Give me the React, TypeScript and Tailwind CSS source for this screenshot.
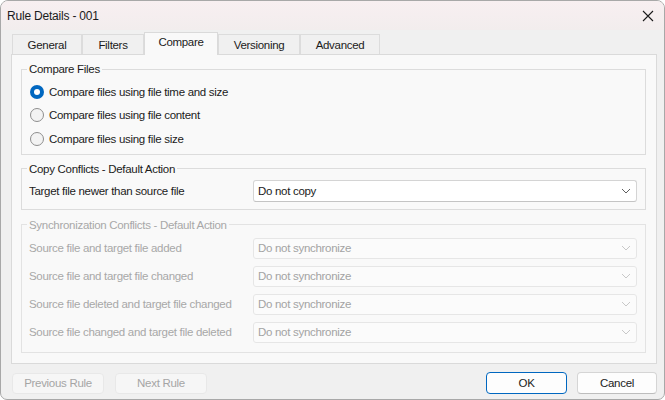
import React, { useState } from "react";

const tabs = ["General", "Filters", "Compare", "Versioning", "Advanced"];
const tabWidths: Record<string, string> = {
  General: "w-[70px]",
  Filters: "w-[62px]",
  Compare: "w-[74px]",
  Versioning: "w-[82px]",
  Advanced: "w-[80px]",
};

const compareOptions = [
  "Compare files using file time and size",
  "Compare files using file content",
  "Compare files using file size",
];

const syncRows = [
  "Source file and target file added",
  "Source file and target file changed",
  "Source file deleted and target file changed",
  "Source file changed and target file deleted",
];

const Chevron: React.FC<{ disabled?: boolean }> = ({ disabled }) => (
  <svg width="10" height="6" viewBox="0 0 10 6" className="shrink-0">
    <path
      d="M1 1 L5 5 L9 1"
      fill="none"
      stroke={disabled ? "#c8c8c8" : "#5f5f5f"}
      strokeWidth="1"
    />
  </svg>
);

const Select: React.FC<{ value: string; disabled?: boolean; tall?: boolean }> = ({
  value,
  disabled,
  tall,
}) => (
  <div
    className={`ml-auto flex w-[384px] shrink-0 items-center justify-between rounded-[3px] border pl-[4px] pr-[5px] ${
      tall ? "h-[22px]" : "h-[21px]"
    } ${
      disabled
        ? "border-[#e6e6e6] bg-[#fbfbfb] text-[#a3a3a3]"
        : "border-[#d4d4d4] border-b-[#c4c4c4] bg-white text-[#1b1b1b]"
    }`}
  >
    <span>{value}</span>
    <Chevron disabled={disabled} />
  </div>
);

const Radio: React.FC<{ checked: boolean; label: string; onClick: () => void }> = ({
  checked,
  label,
  onClick,
}) => (
  <div className="flex h-[23.5px] cursor-default items-center" onClick={onClick}>
    {checked ? (
      <span className="flex h-[14px] w-[14px] items-center justify-center rounded-full bg-[#0067c0]">
        <span className="h-[6px] w-[6px] rounded-full bg-white" />
      </span>
    ) : (
      <span className="h-[14px] w-[14px] rounded-full border border-[#8e8e8e] bg-[#f3f3f3]" />
    )}
    <span className="ml-[5px] text-[#1b1b1b]">{label}</span>
  </div>
);

export default function App() {
  const [compareMode, setCompareMode] = useState(0);
  const [activeTab, setActiveTab] = useState("Compare");

  return (
    <div className="h-[400px] w-[665px] bg-white font-['Liberation_Sans',sans-serif] text-[11.5px] leading-[16px] tracking-[-0.3px]">
      <div className="flex h-full w-full flex-col overflow-hidden rounded-t-[8px] rounded-b-[7px] border border-[#a8a8a8] bg-[#f0f0f0]">
        {/* title bar */}
        <div className="flex h-[29px] shrink-0 items-center justify-between bg-gradient-to-b from-[#f8eff1] to-[#f2eded] pl-[6px] pr-[10px]">
          <span className="text-[12px] tracking-[-0.2px] text-[#1b1b1b]">Rule Details - 001</span>
          <svg width="12" height="12" viewBox="0 0 12 12">
            <path d="M1 1 L11 11 M11 1 L1 11" stroke="#1b1b1b" strokeWidth="1.1" />
          </svg>
        </div>

        {/* tabs */}
        <div className="ml-[11px] mt-[1px] flex h-[23px] items-end">
          {tabs.map((t) => {
            const active = t === activeTab;
            return (
              <div
                key={t}
                onClick={() => setActiveTab(t)}
                className={`flex cursor-default justify-center border border-b-0 ${tabWidths[t]} ${
                  active
                    ? "relative z-10 -mb-px h-[23px] border-[#dadada] bg-[#f9f9f9] pt-[1px]"
                    : "h-[20px] border-[#dcdcdc] bg-[#f0f0f0] pt-[2px]"
                } text-[#1b1b1b]`}
              >
                {t}
              </div>
            );
          })}
        </div>

        {/* panel */}
        <div className="ml-[10px] h-[310px] w-[646px] border border-[#dadada] bg-[#f9f9f9] pl-[9px] pr-[10px] pt-[6px]">
          <fieldset className="border border-[#dcdcdc] pb-[3px] pl-[8px]">
            <legend className="-ml-[3px] px-[2px] text-[#1b1b1b]">Compare Files</legend>
            <div className="pt-[3px]">
              {compareOptions.map((o, i) => (
                <Radio key={o} label={o} checked={compareMode === i} onClick={() => setCompareMode(i)} />
              ))}
            </div>
          </fieldset>

          <fieldset className="mt-[6px] border border-[#dcdcdc] pb-[7px] pl-[7px] pr-[8px]">
            <legend className="-ml-[2px] px-[2px] text-[#1b1b1b]">Copy Conflicts - Default Action</legend>
            <div className="flex items-center pt-[3px]">
              <span className="whitespace-nowrap text-[#1b1b1b]">Target file newer than source file</span>
              <Select value="Do not copy" tall />
            </div>
          </fieldset>

          <fieldset className="mt-[7px] border border-[#e3e3e3] pb-[9px] pl-[7px] pr-[8px]">
            <legend className="-ml-[2px] px-[2px] text-[#a8a8a8]">Synchronization Conflicts - Default Action</legend>
            <div className="flex flex-col gap-[7px] pt-[5px]">
              {syncRows.map((r) => (
                <div key={r} className="flex items-center">
                  <span className="whitespace-nowrap text-[#a8a8a8]">{r}</span>
                  <Select value="Do not synchronize" disabled />
                </div>
              ))}
            </div>
          </fieldset>
        </div>

        {/* buttons */}
        <div className="ml-[11px] mr-[7px] mt-[8px] flex items-center">
          <button className="h-[21px] w-[92px] rounded-[4px] border border-[#e8e8e8] bg-[#f6f6f6] text-[#a5a5a5]">
            Previous Rule
          </button>
          <button className="ml-[11px] h-[21px] w-[92px] rounded-[4px] border border-[#e8e8e8] bg-[#f6f6f6] text-[#a5a5a5]">
            Next Rule
          </button>
          <button className="ml-auto h-[22px] w-[81px] rounded-[4px] border-[1.5px] border-[#0067c0] bg-[#fdfdfd] text-[#1b1b1b]">
            OK
          </button>
          <button className="ml-[10px] h-[22px] w-[80px] rounded-[4px] border border-[#d5d5d5] border-b-[#bdbdbd] bg-[#fdfdfd] text-[#1b1b1b]">
            Cancel
          </button>
        </div>
      </div>
    </div>
  );
}
